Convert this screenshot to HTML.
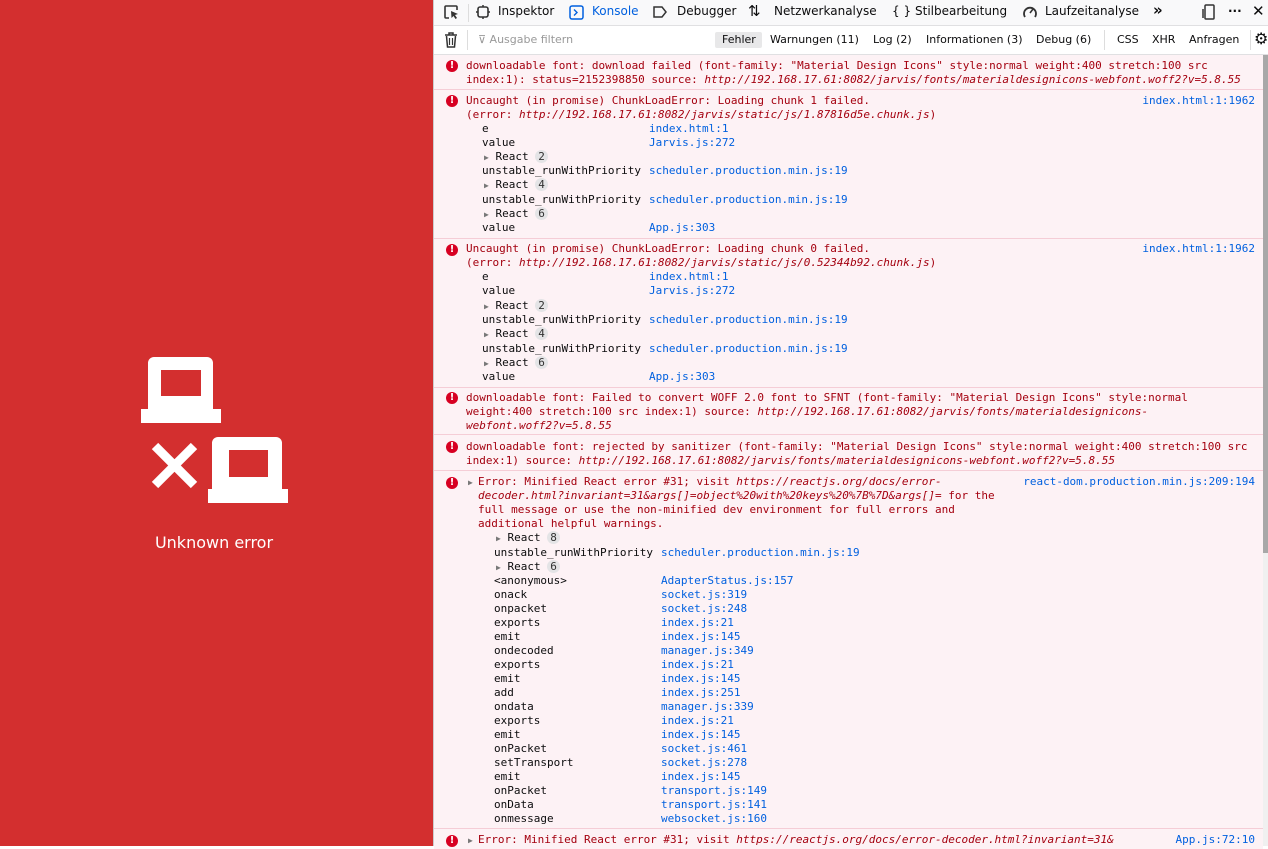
<!DOCTYPE html>
<html><head><meta charset="utf-8"><style>
*{margin:0;padding:0;box-sizing:border-box}
body{width:1268px;height:846px;overflow:hidden;position:relative;background:#fff;font-family:"DejaVu Sans","Liberation Sans",sans-serif}
#left{position:absolute;left:0;top:0;width:433px;height:846px;background:#d32f2f}
#left .t{position:absolute;left:0;width:428px;top:533px;text-align:center;color:#fff;font-size:16px}
#dt{position:absolute;left:433px;top:0;width:835px;height:846px;border-left:1px solid #ccc;background:#fdf2f5}
.tb{position:absolute;left:0;top:0;width:835px;height:26px;background:#f9f9fa;border-bottom:1px solid #e0e0e2;font-size:12px;color:#0c0c0d}
.tb span{position:absolute;top:4px;white-space:nowrap}
.fb{position:absolute;left:0;top:26px;width:835px;height:29px;background:#fff;border-bottom:1px solid #e0e0e2;font-size:11px;color:#0c0c0d}
.fb span{position:absolute;top:7px;white-space:nowrap}
.row{position:absolute;left:0;width:829px;border-bottom:1px solid #f5cdd6;background:#fdf2f5;font-family:"DejaVu Sans Mono","Liberation Mono",monospace;font-size:11px;color:#a4000f;overflow:hidden}
.l{position:absolute;white-space:pre;height:14px;line-height:14px;margin-top:1px}
.i{font-style:italic}
.b{color:#0060df}
.k{color:#0c0c0d}
.ic{position:absolute;left:12px;width:12px;height:12px;border-radius:50%;background:#d70022;color:#fff;font:bold 10px/12px "DejaVu Sans",sans-serif;text-align:center;margin-top:1px}
.bd{display:inline-block;background:#e4e4e6;border-radius:7px;padding:0 3px;height:13px;line-height:13px;color:#333}
.tri{color:#777;font-size:8px}
#sb{position:absolute;left:1263px;top:55px;width:5px;height:791px;background:#f0f0f0}
#sb div{width:5px;height:498px;background:#a8a8a8}
</style></head><body>
<div id="left">
<svg width="433" height="846" style="position:absolute;left:0;top:0">
<path fill="#fff" fill-rule="evenodd" d="M155 357h52a6 6 0 0 1 6 6v47h-65v-47a6 6 0 0 1 6-6zM161 370v26h40v-26z"/>
<rect x="141" y="409" width="80" height="14" fill="#fff"/>
<path fill="#fff" fill-rule="evenodd" d="M219 437h57a6 6 0 0 1 6 6v47h-70v-47a6 6 0 0 1 6-6zM229 450v27h39v-27z"/>
<rect x="208" y="489" width="80" height="14" fill="#fff"/>
<path stroke="#fff" stroke-width="9" d="M155 446l39 39M194 446l-39 39"/>
</svg>
<div class="t">Unknown error</div>
</div>
<div id="dt">
<div class="tb">
<svg style="position:absolute;left:9px;top:4px" width="16" height="16"><path d="M6 14H3a1 1 0 0 1-1-1V3a1 1 0 0 1 1-1h10a1 1 0 0 1 1 1v3" fill="none" stroke="#333" stroke-width="1.6"/><path d="M8 7l7 3-3 1 2 3-1.5 1-2-3-2 2z" fill="#333"/></svg>
<div style="position:absolute;left:34px;top:4px;width:1px;height:18px;background:#ddd"></div>
<svg style="position:absolute;left:42px;top:5px" width="14" height="14"><rect x="2" y="2" width="10" height="10" rx="2" fill="none" stroke="#333" stroke-width="1.6"/><path d="M7 0v2M7 12v2M0 7h2M12 7h2" stroke="#333" stroke-width="1.5"/></svg>
<span style="left:64px">Inspektor</span>
<svg style="position:absolute;left:135px;top:5px" width="15" height="15"><rect x="1" y="1" width="13" height="13" rx="2" fill="none" stroke="#0060df" stroke-width="1.5"/><path d="M5 4.5l3 3-3 3" fill="none" stroke="#0060df" stroke-width="1.4"/></svg>
<span style="left:158px;color:#0060df">Konsole</span>
<svg style="position:absolute;left:218px;top:5px" width="16" height="14"><path d="M2 2h8l4 5-4 5H2z" fill="none" stroke="#333" stroke-width="1.5"/></svg>
<span style="left:243px">Debugger</span>
<span style="left:314px;top:2px;font-size:15px">⇅</span>
<span style="left:340px">Netzwerkanalyse</span>
<span style="left:458px">{ }</span>
<span style="left:481px">Stilbearbeitung</span>
<svg style="position:absolute;left:588px;top:4px" width="16" height="16"><path d="M3 13A6 6 0 1 1 13 13" fill="none" stroke="#333" stroke-width="1.8"/><path d="M8 9l3-4" stroke="#333" stroke-width="1.6"/></svg>
<span style="left:611px">Laufzeitanalyse</span>
<span style="left:719px;font-weight:bold;font-size:15px;top:1px">»</span>
<svg style="position:absolute;left:768px;top:4px" width="14" height="16"><rect x="3" y="1" width="9" height="14" rx="1" fill="none" stroke="#333" stroke-width="1.5"/><path d="M1 5v9" stroke="#333" stroke-width="1.5"/></svg>
<span style="left:794px;font-weight:bold">···</span>
<span style="left:818px;font-size:15px;top:2px">✕</span>
</div>
<div class="fb">
<svg style="position:absolute;left:10px;top:6px" width="14" height="16"><path d="M1 3h12M5 3V1h4v2M2.5 4l1 11h7l1-11" fill="none" stroke="#333" stroke-width="1.5"/><path d="M5.5 6v7M8.5 6v7" stroke="#333" stroke-width="1.2"/></svg>
<div style="position:absolute;left:33px;top:4px;width:1px;height:20px;background:#ddd"></div>
<span style="left:44px;color:#999">⊽ Ausgabe filtern</span>
<div style="position:absolute;left:281px;top:6px;width:47px;height:16px;background:#e8e8e9;border-radius:2px"></div>
<span style="left:288px">Fehler</span>
<span style="left:336px">Warnungen (11)</span>
<span style="left:439px">Log (2)</span>
<span style="left:492px">Informationen (3)</span>
<span style="left:602px">Debug (6)</span>
<div style="position:absolute;left:670px;top:4px;width:1px;height:20px;background:#ddd"></div>
<span style="left:683px">CSS</span>
<span style="left:718px">XHR</span>
<span style="left:755px">Anfragen</span>
<div style="position:absolute;left:816px;top:4px;width:1px;height:20px;background:#ddd"></div>
<span style="left:820px;font-size:16px;top:3px">⚙</span>
</div>

<div class="row" style="top:55px;height:35px">
<div class="ic" style="top:4px">!</div>
<div class="l" style="left:32px;top:3px">downloadable font: download failed (font-family: "Material Design Icons" style:normal weight:400 stretch:100 src</div>
<div class="l" style="left:32px;top:17px">index:1): status=2152398850 source: <span class="i">http://192.168.17.61:8082/jarvis/fonts/materialdesignicons-webfont.woff2?v=5.8.55</span></div>
</div>

<div class="row" style="top:90px;height:149px">
<div class="ic" style="top:4px">!</div>
<div class="l" style="left:32px;top:3px">Uncaught (in promise) ChunkLoadError: Loading chunk 1 failed.</div>
<div class="l b" style="right:8px;top:3px">index.html:1:1962</div>
<div class="l" style="left:32px;top:17px">(error: <span class="i">http://192.168.17.61:8082/jarvis/static/js/1.87816d5e.chunk.js</span>)</div>
<div class="l k" style="left:48px;top:31px">e</div><div class="l b" style="left:215px;top:31px">index.html:1</div>
<div class="l k" style="left:48px;top:45px">value</div><div class="l b" style="left:215px;top:45px">Jarvis.js:272</div>
<div class="l k" style="left:50px;top:59px"><span class="tri">▶</span> React <span class="bd">2</span></div>
<div class="l k" style="left:48px;top:73px">unstable_runWithPriority</div><div class="l b" style="left:215px;top:73px">scheduler.production.min.js:19</div>
<div class="l k" style="left:50px;top:87px"><span class="tri">▶</span> React <span class="bd">4</span></div>
<div class="l k" style="left:48px;top:102px">unstable_runWithPriority</div><div class="l b" style="left:215px;top:102px">scheduler.production.min.js:19</div>
<div class="l k" style="left:50px;top:116px"><span class="tri">▶</span> React <span class="bd">6</span></div>
<div class="l k" style="left:48px;top:130px">value</div><div class="l b" style="left:215px;top:130px">App.js:303</div>
</div>

<div class="row" style="top:239px;height:149px">
<div class="ic" style="top:4px">!</div>
<div class="l" style="left:32px;top:2px">Uncaught (in promise) ChunkLoadError: Loading chunk 0 failed.</div>
<div class="l b" style="right:8px;top:2px">index.html:1:1962</div>
<div class="l" style="left:32px;top:16px">(error: <span class="i">http://192.168.17.61:8082/jarvis/static/js/0.52344b92.chunk.js</span>)</div>
<div class="l k" style="left:48px;top:30px">e</div><div class="l b" style="left:215px;top:30px">index.html:1</div>
<div class="l k" style="left:48px;top:44px">value</div><div class="l b" style="left:215px;top:44px">Jarvis.js:272</div>
<div class="l k" style="left:50px;top:59px"><span class="tri">▶</span> React <span class="bd">2</span></div>
<div class="l k" style="left:48px;top:73px">unstable_runWithPriority</div><div class="l b" style="left:215px;top:73px">scheduler.production.min.js:19</div>
<div class="l k" style="left:50px;top:87px"><span class="tri">▶</span> React <span class="bd">4</span></div>
<div class="l k" style="left:48px;top:102px">unstable_runWithPriority</div><div class="l b" style="left:215px;top:102px">scheduler.production.min.js:19</div>
<div class="l k" style="left:50px;top:116px"><span class="tri">▶</span> React <span class="bd">6</span></div>
<div class="l k" style="left:48px;top:130px">value</div><div class="l b" style="left:215px;top:130px">App.js:303</div>
</div>

<div class="row" style="top:388px;height:47px">
<div class="ic" style="top:3px">!</div>
<div class="l" style="left:32px;top:2px">downloadable font: Failed to convert WOFF 2.0 font to SFNT (font-family: "Material Design Icons" style:normal</div>
<div class="l" style="left:32px;top:16px">weight:400 stretch:100 src index:1) source: <span class="i">http://192.168.17.61:8082/jarvis/fonts/materialdesignicons-</span></div>
<div class="l i" style="left:32px;top:30px">webfont.woff2?v=5.8.55</div>
</div>

<div class="row" style="top:435px;height:36px">
<div class="ic" style="top:5px">!</div>
<div class="l" style="left:32px;top:4px">downloadable font: rejected by sanitizer (font-family: "Material Design Icons" style:normal weight:400 stretch:100 src</div>
<div class="l" style="left:32px;top:18px">index:1) source: <span class="i">http://192.168.17.61:8082/jarvis/fonts/materialdesignicons-webfont.woff2?v=5.8.55</span></div>
</div>

<div class="row" style="top:471px;height:358px">
<div class="ic" style="top:5px">!</div>
<div class="l" style="left:34px;top:3px"><span class="tri">▶</span></div>
<div class="l" style="left:44px;top:3px">Error: Minified React error #31; visit <span class="i">https://reactjs.org/docs/error-</span></div>
<div class="l b" style="right:8px;top:3px">react-dom.production.min.js:209:194</div>
<div class="l" style="left:44px;top:17px"><span class="i">decoder.html?invariant=31&amp;args[]=object%20with%20keys%20%7B%7D&amp;args[]=</span> for the</div>
<div class="l" style="left:44px;top:31px">full message or use the non-minified dev environment for full errors and</div>
<div class="l" style="left:44px;top:45px">additional helpful warnings.</div>
<div class="l k" style="left:62px;top:59px"><span class="tri">▶</span> React <span class="bd">8</span></div>
<div class="l k" style="left:60px;top:74px">unstable_runWithPriority</div><div class="l b" style="left:227px;top:74px">scheduler.production.min.js:19</div>
<div class="l k" style="left:62px;top:88px"><span class="tri">▶</span> React <span class="bd">6</span></div>
<div class="l k" style="left:60px;top:102px">&lt;anonymous&gt;</div><div class="l b" style="left:227px;top:102px">AdapterStatus.js:157</div>
<div class="l k" style="left:60px;top:116px">onack</div><div class="l b" style="left:227px;top:116px">socket.js:319</div>
<div class="l k" style="left:60px;top:130px">onpacket</div><div class="l b" style="left:227px;top:130px">socket.js:248</div>
<div class="l k" style="left:60px;top:144px">exports</div><div class="l b" style="left:227px;top:144px">index.js:21</div>
<div class="l k" style="left:60px;top:158px">emit</div><div class="l b" style="left:227px;top:158px">index.js:145</div>
<div class="l k" style="left:60px;top:172px">ondecoded</div><div class="l b" style="left:227px;top:172px">manager.js:349</div>
<div class="l k" style="left:60px;top:186px">exports</div><div class="l b" style="left:227px;top:186px">index.js:21</div>
<div class="l k" style="left:60px;top:200px">emit</div><div class="l b" style="left:227px;top:200px">index.js:145</div>
<div class="l k" style="left:60px;top:214px">add</div><div class="l b" style="left:227px;top:214px">index.js:251</div>
<div class="l k" style="left:60px;top:228px">ondata</div><div class="l b" style="left:227px;top:228px">manager.js:339</div>
<div class="l k" style="left:60px;top:242px">exports</div><div class="l b" style="left:227px;top:242px">index.js:21</div>
<div class="l k" style="left:60px;top:256px">emit</div><div class="l b" style="left:227px;top:256px">index.js:145</div>
<div class="l k" style="left:60px;top:270px">onPacket</div><div class="l b" style="left:227px;top:270px">socket.js:461</div>
<div class="l k" style="left:60px;top:284px">setTransport</div><div class="l b" style="left:227px;top:284px">socket.js:278</div>
<div class="l k" style="left:60px;top:298px">emit</div><div class="l b" style="left:227px;top:298px">index.js:145</div>
<div class="l k" style="left:60px;top:312px">onPacket</div><div class="l b" style="left:227px;top:312px">transport.js:149</div>
<div class="l k" style="left:60px;top:326px">onData</div><div class="l b" style="left:227px;top:326px">transport.js:141</div>
<div class="l k" style="left:60px;top:340px">onmessage</div><div class="l b" style="left:227px;top:340px">websocket.js:160</div>
</div>

<div class="row" style="top:829px;height:20px;border-bottom:none">
<div class="ic" style="top:5px">!</div>
<div class="l" style="left:34px;top:3px"><span class="tri">▶</span></div>
<div class="l" style="left:44px;top:3px">Error: Minified React error #31; visit <span class="i">https://reactjs.org/docs/error-decoder.html?invariant=31&amp;</span></div>
<div class="l b" style="right:8px;top:3px">App.js:72:10</div>
</div>
</div>
<div id="sb"><div></div></div>
</body></html>
